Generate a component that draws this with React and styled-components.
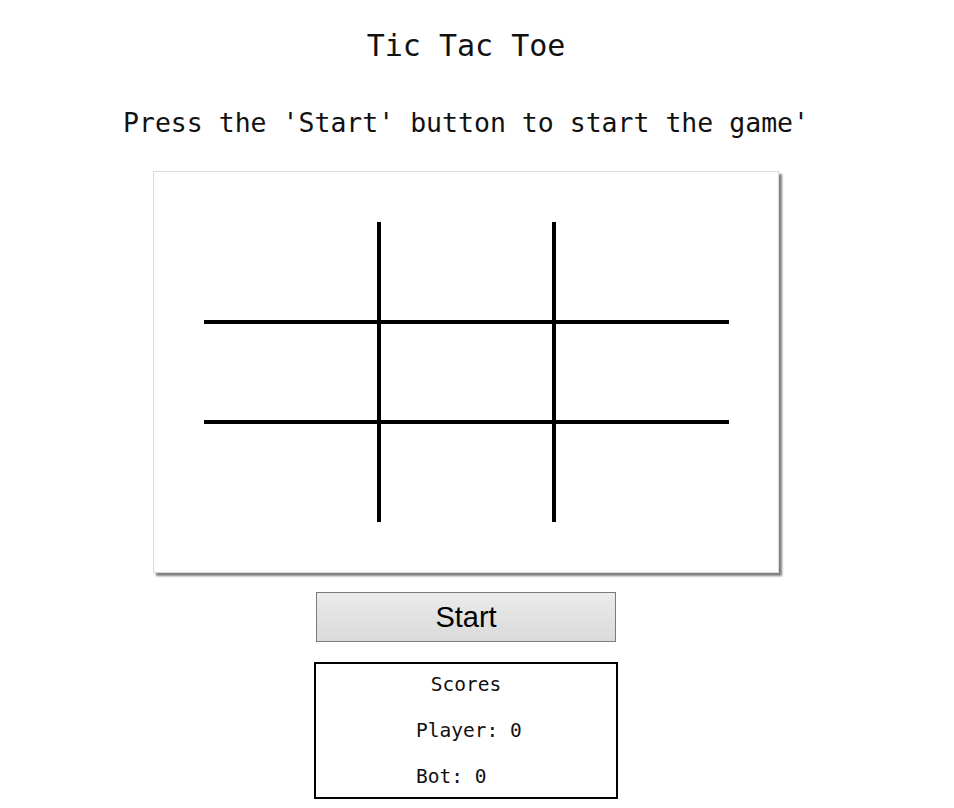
import React from 'react';
import styled, { createGlobalStyle } from 'styled-components';

const GlobalStyle = createGlobalStyle`
  body {
    margin: 0;
    background: #ffffff;
    font-family: "DejaVu Sans Mono", "Liberation Mono", monospace;
  }
`;

export const Page = styled.div`
  width: 932px;
  display: flex;
  flex-direction: column;
  align-items: center;
`;

export const Title = styled.h1`
  margin: 28px 0 0;
  font-size: 30px;
  font-weight: normal;
  line-height: 36px;
  color: #111;
`;

export const Message = styled.h2`
  margin: 43px 0 0;
  font-size: 26.5px;
  font-weight: normal;
  line-height: 32px;
  color: #111;
`;

export const Board = styled.div`
  margin-top: 32px;
  width: 626px;
  height: 402px;
  box-sizing: border-box;
  border: 1px solid #dcdcdc;
  box-shadow: 3px 3px 2px #808080;
  padding: 50px;
  background: #fff;
`;

export const Grid = styled.div`
  display: grid;
  grid-template-columns: repeat(3, 175px);
  grid-template-rows: repeat(3, 100px);
`;

export const Cell = styled.div`
  box-sizing: border-box;
  border-right: ${p => (p.$col < 2 ? '2px solid #000' : 'none')};
  border-left: ${p => (p.$col > 0 ? '2px solid #000' : 'none')};
  border-bottom: ${p => (p.$row < 2 ? '2px solid #000' : 'none')};
  border-top: ${p => (p.$row > 0 ? '2px solid #000' : 'none')};
`;

export const StartButton = styled.button`
  margin-top: 19px;
  width: 300px;
  height: 50px;
  border: 1px solid #7a7a7a;
  background: linear-gradient(#ebebeb, #dadada);
  font-family: "Liberation Sans", Arial, sans-serif;
  font-size: 29px;
  color: #000;
  padding: 0;
`;

export const ScoreBox = styled.div`
  margin-top: 20px;
  width: 304px;
  height: 137px;
  box-sizing: border-box;
  border: 2px solid #000;
  display: flex;
  flex-direction: column;
  align-items: center;
  font-size: 19.5px;
  color: #111;
`;

export const ScoreTitle = styled.div`
  margin-top: 8px;
  line-height: 26px;
`;

export const ScoreLine = styled.div`
  width: 100px;
  margin-top: 20px;
  line-height: 26px;
  white-space: pre;
`;

export default function App() {
  const cells = [];
  for (let r = 0; r < 3; r++) {
    for (let c = 0; c < 3; c++) {
      cells.push(<Cell key={r + '-' + c} $row={r} $col={c} />);
    }
  }

  return (
    <>
      <GlobalStyle />
      <Page>
        <Title>Tic Tac Toe</Title>
        <Message>Press the 'Start' button to start the game'</Message>
        <Board>
          <Grid>{cells}</Grid>
        </Board>
        <StartButton>Start</StartButton>
        <ScoreBox>
          <ScoreTitle>Scores</ScoreTitle>
          <ScoreLine>Player: 0</ScoreLine>
          <ScoreLine>Bot: 0</ScoreLine>
        </ScoreBox>
      </Page>
    </>
  );
}
